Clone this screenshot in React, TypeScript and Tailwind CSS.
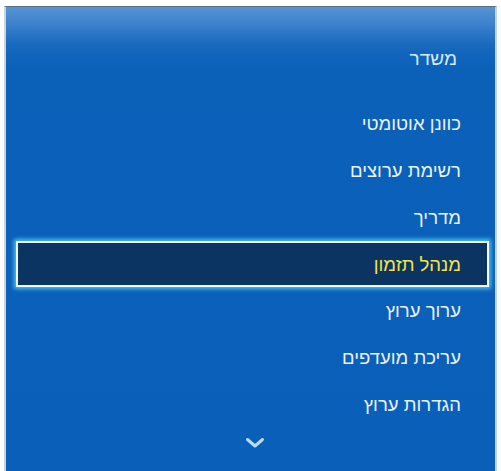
const items = [
  'כוונן אוטומטי',
  'רשימת ערוצים',
  'מדריך',
  'מנהל תזמון',
  'ערוך ערוץ',
  'עריכת מועדפים',
  'הגדרות ערוץ',
];

const selected = 3;

export default function App() {
  return (
    <div className="w-[501px] h-[471px] bg-white overflow-hidden pl-[4px] pt-[6px] pr-[4px]">
      <div
        dir="rtl"
        className="relative h-[465px] border-t border-t-[#5d6f84] border-l-2 border-l-[#c9d5e0] border-r-2 border-r-[#c3d3e2] bg-[linear-gradient(to_bottom,#5593d4_0px,#3f83cd_16px,#1768be_38px,#0b60b8_62px,#0a60b8_100%)]"
        style={{ fontFamily: '"Liberation Sans", "DejaVu Sans", sans-serif' }}
      >
        <div className="h-[94px] flex items-center pr-[38px] pt-[10px]">
          <span className="text-[19px] text-[#d4ecfb]">משדר</span>
        </div>
        <ul className="flex flex-col">
          {items.map((label, i) =>
            i === selected ? (
              <li key={label} className="h-[46.7px] flex items-center pr-[6px] pl-[10px]">
                <div className="h-[46px] w-full flex items-center pr-[26px] bg-[#0c3462] border-2 border-[#f2fbff] shadow-[0_0_4px_2px_#49c3f5]">
                  <span className="text-[18.5px] text-[#f3e64a]">{label}</span>
                </div>
              </li>
            ) : (
              <li key={label} className="h-[46.7px] flex items-center pr-[34px]">
                <span className="text-[18.5px] text-[#eaf3fb]">{label}</span>
              </li>
            )
          )}
        </ul>
        <div className="flex justify-center pt-[9px] pl-[8px]">
          <svg width="20" height="12" viewBox="0 0 20 12" fill="none">
            <path d="M2.5 2.5 L10 9 L17.5 2.5" stroke="#b9dcf7" strokeWidth="3" strokeLinecap="round" strokeLinejoin="round" />
          </svg>
        </div>
      </div>
    </div>
  );
}
